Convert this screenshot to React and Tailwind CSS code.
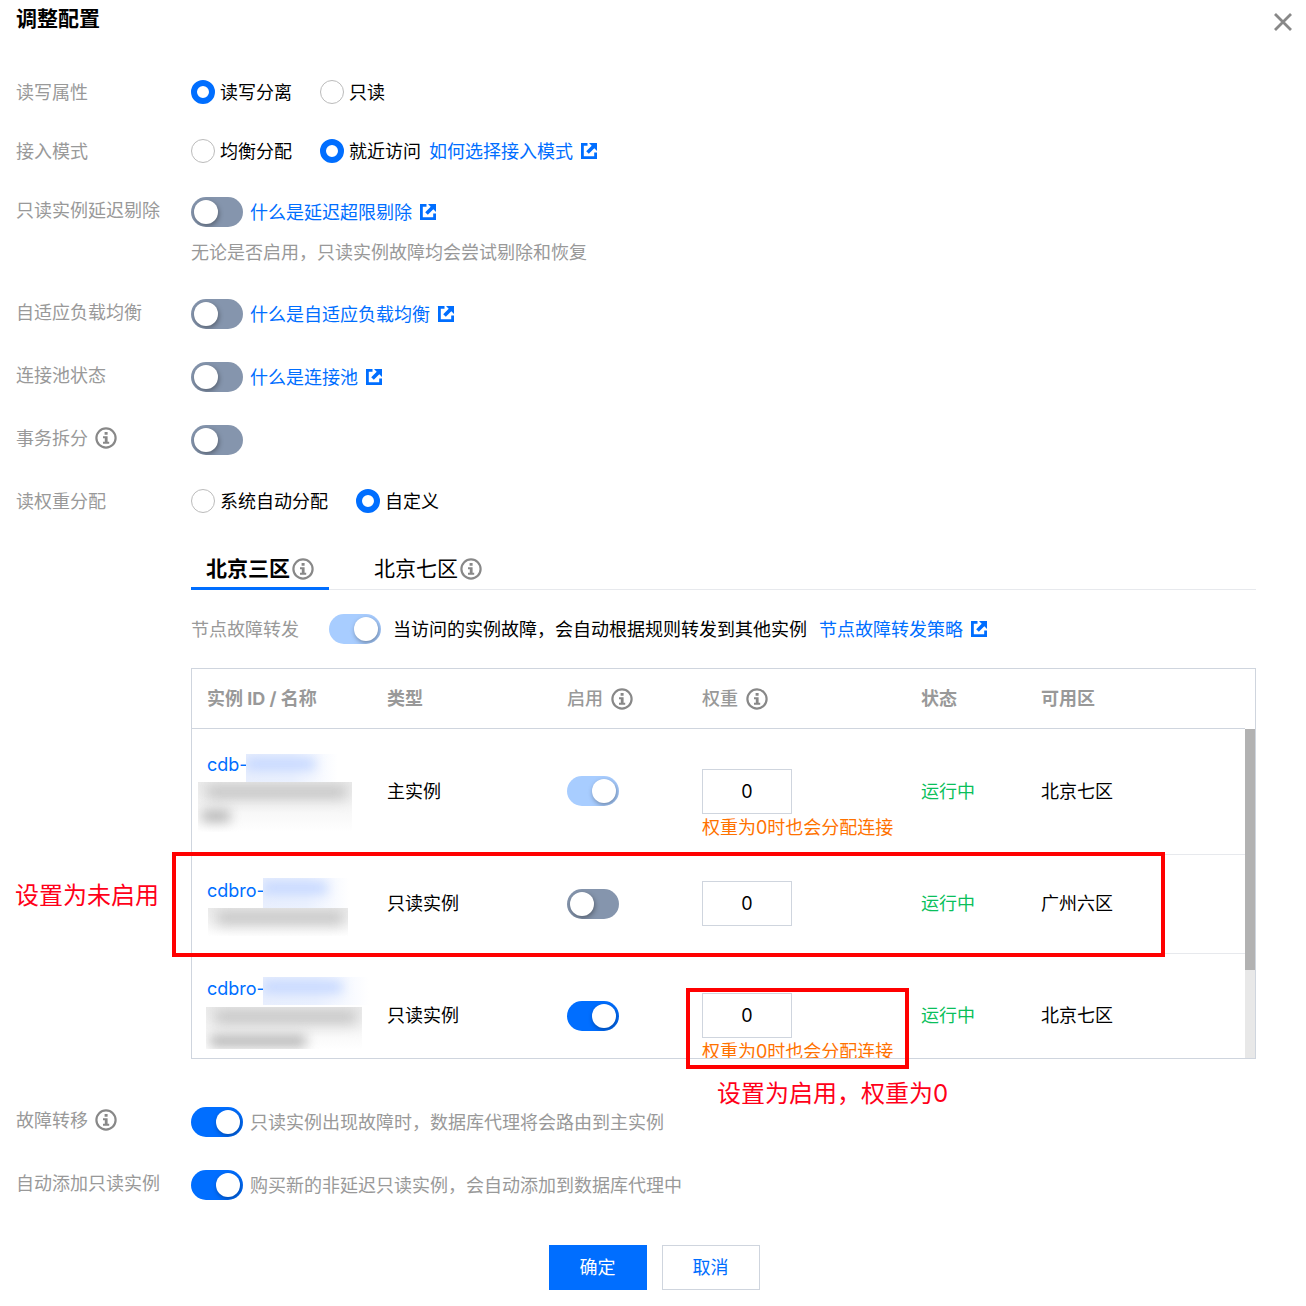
import { useState } from 'react'

const INSTANCES = [
  { id: 'cdb-', type: '主实例', enabled: true, locked: true, hint: true, zone: '北京七区' },
  { id: 'cdbro-', type: '只读实例', enabled: false, locked: false, hint: false, zone: '广州六区' },
  { id: 'cdbro-', type: '只读实例', enabled: true, locked: false, hint: true, zone: '北京七区' },
]

// sizes of the masked parts of the id / name cell
const MASKS = [
  { cell: 'h-[81px]', id: 'mt-[3px] w-[92px] h-7', name: '-ml-[9px] w-[154px] h-[50px]', tail: 'w-7' },
  { cell: 'h-[54px]', id: 'mt-px w-[86px] h-[30px]', name: 'ml-px w-[140px] h-7', tail: '' },
  { cell: 'h-[81px]', id: 'mt-[2px] w-[106px] h-7', name: 'mt-[2px] -ml-px w-[156px] h-[42px]', tail: 'w-24' },
]

function InfoIcon() {
  return (
    <svg className="w-[22px] h-[22px] shrink-0" viewBox="0 0 22 22" fill="none" aria-hidden="true">
      <circle cx="11" cy="11" r="9.6" stroke="#888" strokeWidth="2.2" />
      <path d="M9.6 5h3v2.8h-3zM8 9.2h4.6v5.6h1.6v2H8v-2h1.8v-3.6H8z" fill="#888" />
    </svg>
  )
}

function LinkIcon() {
  return (
    <svg className="w-4 h-4 shrink-0" viewBox="0 0 16 16" fill="none" aria-hidden="true">
      <path d="M6.5 1.4H1.4v13.2h13.2V9.5" stroke="#006eff" strokeWidth="2.8" />
      <path d="M8 0h8v8l-2.7-2.7-5.5 5.5-2.6-2.6 5.5-5.5z" fill="#006eff" />
    </svg>
  )
}

function DocLink({ children }) {
  return (
    <a href="#" className="flex items-center gap-2 text-[#006eff]">
      {children}
      <LinkIcon />
    </a>
  )
}

function Switch({ label, defaultChecked, disabled }) {
  return (
    <input
      type="checkbox"
      role="switch"
      aria-label={label}
      defaultChecked={defaultChecked}
      disabled={disabled}
      className="appearance-none block shrink-0 w-[52px] h-[30px] p-[3px] overflow-hidden rounded-full bg-[#8595ad] checked:bg-[#006eff] disabled:checked:bg-[#a8cdff] before:block before:w-6 before:h-6 before:rounded-full before:bg-white before:shadow-[1px_2px_5px_rgba(0,0,0,0.35)] checked:before:ml-[22px]"
    />
  )
}

function Radio({ name, label, defaultChecked }) {
  return (
    <label className="flex items-center gap-[5px]">
      <input
        type="radio"
        name={name}
        defaultChecked={defaultChecked}
        className="appearance-none w-6 h-6 rounded-full border border-[#bbb] bg-white checked:border-[6px] checked:border-[#006eff]"
      />
      {label}
    </label>
  )
}

function Row({ label, info, children }) {
  return (
    <div className="grid grid-cols-[175px_minmax(0,1fr)]">
      <div className="flex items-center gap-[7px] h-[26px] text-[#999]">
        {label}
        {info && <InfoIcon />}
      </div>
      <div>{children}</div>
    </div>
  )
}

function Columns() {
  return (
    <colgroup>
      <col className="w-[180px]" />
      <col className="w-[180px]" />
      <col className="w-[135px]" />
      <col className="w-[219px]" />
      <col className="w-[120px]" />
      <col />
    </colgroup>
  )
}

function MaskedName({ id, mask }) {
  return (
    <div className={mask.cell}>
      <div className="flex items-start">
        <a href="#" className="text-[#006eff] leading-7">{id}</a>
        <span className={`${mask.id} -ml-[2px] shrink-0 overflow-hidden bg-linear-to-r from-[#e9effd] via-[#ebf1fe] to-white`}>
          <span className="block w-3/4 h-3 mt-1 bg-[#c3d6ff] blur-[6px]" />
        </span>
      </div>
      <div className={`${mask.name} overflow-hidden bg-linear-to-b from-[#ececec] to-white`}>
        <span className="block w-11/12 h-3 mt-1 ml-2 bg-[#bdbdbd] blur-[7px]" />
        {mask.tail && <span className={`${mask.tail} block h-3 mt-3 ml-1 bg-[#b5b5b5] blur-[6px]`} />}
      </div>
    </div>
  )
}

function InstanceTable() {
  return (
    <div className="border border-[#cfd5de]">
      <div className="mr-[10px] border-b border-[#cfd5de]">
        <table className="w-full table-fixed text-left text-[#999]">
          <Columns />
          <thead>
            <tr className="h-[59px] *:px-[15px] *:py-0 *:font-bold">
              <th>实例 ID / 名称</th>
              <th>类型</th>
              <th>
                <span className="flex items-center gap-2 font-medium">启用 <InfoIcon /></span>
              </th>
              <th>
                <span className="flex items-center gap-2 font-medium">权重 <InfoIcon /></span>
              </th>
              <th>状态</th>
              <th>可用区</th>
            </tr>
          </thead>
        </table>
      </div>
      <div className="flex h-[329px] overflow-hidden">
        <div className="flex-1">
          <table className="w-full table-fixed text-left">
            <Columns />
            <tbody>
              {INSTANCES.map((item, i) => (
                <tr
                  key={i}
                  className={`border-b border-[#e7e9ed] *:px-[15px] *:py-0 ${item.hint ? 'h-[125px]' : 'h-[99px]'}`}
                >
                  <td><MaskedName id={item.id} mask={MASKS[i]} /></td>
                  <td>{item.type}</td>
                  <td><Switch label="启用" defaultChecked={item.enabled} disabled={item.locked} /></td>
                  <td>
                    <div className="h-[45px]">
                      <input
                        type="text"
                        aria-label="权重"
                        defaultValue="0"
                        className="block w-[90px] h-[45px] border border-[#cfd5de] text-center"
                      />
                      {item.hint && <p className="text-[#ff7200] whitespace-nowrap">权重为0时也会分配连接</p>}
                    </div>
                  </td>
                  <td className="text-[#0abf5b]">运行中</td>
                  <td>{item.zone}</td>
                </tr>
              ))}
            </tbody>
          </table>
        </div>
        <div className="w-[10px] bg-[#e8e8e8]">
          <div className="h-[241px] bg-[#b2b2b2]" />
        </div>
      </div>
    </div>
  )
}

export default function App() {
  const [zone, setZone] = useState('北京三区')

  return (
    <main className="min-h-screen bg-white pl-4 pr-[14px] pb-4 text-[18px] leading-[27px] text-black font-['Inter','Noto_Sans_CJK_SC',sans-serif]">
      <header className="flex items-start justify-between h-[79px] pt-[5px]">
        <h1 className="text-[21px] font-bold">调整配置</h1>
        <button type="button" aria-label="关闭" className="pt-2">
          <svg className="w-[18px] h-[18px]" viewBox="0 0 18 18" fill="none">
            <path d="M1 1l16 16M17 1L1 17" stroke="#888" strokeWidth="2.8" />
          </svg>
        </button>
      </header>

      <div className="flex flex-col gap-[33px]">
        <Row label="读写属性">
          <div className="flex items-center gap-7 h-[26px]">
            <Radio name="rw" label="读写分离" defaultChecked />
            <Radio name="rw" label="只读" />
          </div>
        </Row>

        <Row label="接入模式">
          <div className="flex items-center h-[26px]">
            <div className="flex gap-7 mr-2">
              <Radio name="mode" label="均衡分配" />
              <Radio name="mode" label="就近访问" defaultChecked />
            </div>
            <DocLink>如何选择接入模式</DocLink>
          </div>
        </Row>

        <Row label="只读实例延迟剔除">
          <div className="flex items-center gap-[7px]">
            <Switch label="只读实例延迟剔除" />
            <DocLink>什么是延迟超限剔除</DocLink>
          </div>
          <p className="mt-3 text-[#999]">无论是否启用，只读实例故障均会尝试剔除和恢复</p>
        </Row>

        <Row label="自适应负载均衡">
          <div className="flex items-center gap-[7px]">
            <Switch label="自适应负载均衡" />
            <DocLink>什么是自适应负载均衡</DocLink>
          </div>
        </Row>

        <Row label="连接池状态">
          <div className="flex items-center gap-[7px]">
            <Switch label="连接池状态" />
            <DocLink>什么是连接池</DocLink>
          </div>
        </Row>

        <Row label="事务拆分" info>
          <Switch label="事务拆分" />
        </Row>

        <Row label="读权重分配">
          <div className="flex items-center gap-7 h-[26px]">
            <Radio name="weight" label="系统自动分配" />
            <Radio name="weight" label="自定义" defaultChecked />
          </div>

          <div className="mr-9">
            {/* 可用区 */}
            <div role="tablist" className="flex gap-[30px] mt-9 h-10 text-[21px] border-b border-[#e7e9ed]">
              {['北京三区', '北京七区'].map(z => (
                <button
                  key={z}
                  type="button"
                  role="tab"
                  aria-selected={zone === z}
                  onClick={() => setZone(z)}
                  className={`flex items-center gap-[2px] h-10 px-[15px] border-b-[3px] ${zone === z ? 'border-[#006eff] font-bold' : 'border-transparent'}`}
                >
                  {z}
                  <InfoIcon />
                </button>
              ))}
            </div>

            <div className="flex items-center my-6">
              <span className="w-[138px] text-[#999]">节点故障转发</span>
              <Switch label="节点故障转发" defaultChecked disabled />
              <span className="mx-3">当访问的实例故障，会自动根据规则转发到其他实例</span>
              <DocLink>节点故障转发策略</DocLink>
            </div>

            <div className="relative mb-[15px]">
              <InstanceTable />
              {/* 标注 */}
              <div className="absolute left-[-19px] top-[184px] w-[993px] h-[105px] border-4 border-[#ff0000]" />
              <p className="absolute left-[-176px] top-[212px] text-2xl text-[#ff0019] whitespace-nowrap">设置为未启用</p>
              <div className="absolute left-[495px] top-[320px] w-[223px] h-[81px] border-4 border-[#ff0000]" />
              <p className="absolute left-[526px] top-[410px] text-2xl text-[#ff0019] whitespace-nowrap">设置为启用，权重为0</p>
            </div>
          </div>
        </Row>

        <Row label="故障转移" info>
          <div className="flex items-center gap-[7px] text-[#999]">
            <Switch label="故障转移" defaultChecked />
            只读实例出现故障时，数据库代理将会路由到主实例
          </div>
        </Row>

        <Row label="自动添加只读实例">
          <div className="flex items-center gap-[7px] text-[#999]">
            <Switch label="自动添加只读实例" defaultChecked />
            购买新的非延迟只读实例，会自动添加到数据库代理中
          </div>
        </Row>
      </div>

      <footer className="flex justify-center gap-[15px] mt-[45px]">
        <button type="button" className="w-[98px] h-[45px] bg-[#006eff] text-white">确定</button>
        <button type="button" className="w-[98px] h-[45px] border border-[#cfd5de] text-[#006eff]">取消</button>
      </footer>
    </main>
  )
}
